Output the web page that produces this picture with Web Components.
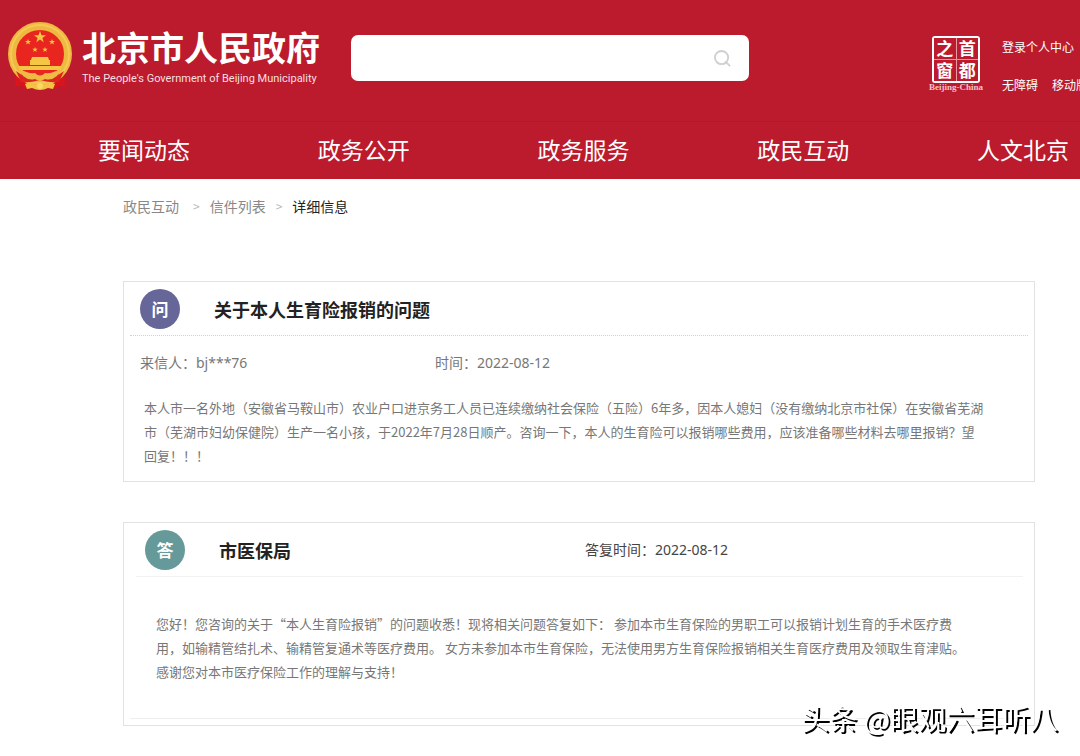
<!DOCTYPE html>
<html lang="zh-CN">
<head>
<meta charset="utf-8">
<meta name="viewport" content="width=device-width, initial-scale=1">
<title>北京市人民政府 - 信件详细信息</title>
<style>
  * { box-sizing: border-box; }

  body {
    margin: 0;
    background: #fff;
    color: #777;
    font-family: "Noto Sans CJK SC", "Noto Sans", sans-serif;
    font-size: 14px;
    line-height: 24px;
    overflow-x: hidden;
  }

  main {
    padding: 0 45px 30px 123px;
  }

  letter-card + letter-card {
    margin-top: 40px;
  }
</style>
</head>
<body>
  <site-header></site-header>
  <site-nav></site-nav>
  <main>
    <bread-crumb></bread-crumb>
    <letter-card kind="ask" mark="问">
      <span slot="title">关于本人生育险报销的问题</span>
      <span slot="from">来信人：<letter-value>bj***76</letter-value></span>
      <span slot="time">时间：<letter-value>2022-08-12</letter-value></span>
      本人市一名外地（安徽省马鞍山市）农业户口进京务工人员已连续缴纳社会保险（五险）6年多，因本人媳妇（没有缴纳北京市社保）在安徽省芜湖市（芜湖市妇幼保健院）生产一名小孩，于2022年7月28日顺产。咨询一下，本人的生育险可以报销哪些费用，应该准备哪些材料去哪里报销？望回复！！！
    </letter-card>
    <letter-card kind="answer" mark="答">
      <span slot="title">市医保局</span>
      <span slot="reply">答复时间：<letter-value>2022-08-12</letter-value></span>
      您好！您咨询的关于“本人生育险报销”的问题收悉！现将相关问题答复如下： 参加本市生育保险的男职工可以报销计划生育的手术医疗费用，如输精管结扎术、输精管复通术等医疗费用。 女方未参加本市生育保险，无法使用男方生育保险报销相关生育医疗费用及领取生育津贴。感谢您对本市医疗保险工作的理解与支持！
    </letter-card>
  </main>
  <water-mark>头条 @眼观六耳听八</water-mark>

<script>
// small helper: turn a html string into a template
function makeTemplate(html) {
  const template = document.createElement('template');
  template.innerHTML = html;
  return template;
}

const emblemTemplate = makeTemplate(`
  <style>
  :host { display: block; flex: none; width: 64px; height: 70px; }
  svg { display: block; }
  </style>
  <svg width="64" height="70" viewBox="0 0 64 70" aria-hidden="true">
    <path d="M8 46 L7 65 Q14 62 19 68 L25 60 H39 L45 68 Q50 62 57 65 L56 46Z" fill="#d9141c"/>
    <circle cx="32" cy="32" r="28" fill="#e8261f" stroke="#efb840" stroke-width="8"/>
    <circle cx="32" cy="32" r="29" fill="none" stroke="#f4ca55" stroke-width="2"/>
    <g fill="#f5c544">
      <path d="M32 9l1.500 4.200h4.500l-3.600 2.700 1.300 4.300-3.700-2.600-3.700 2.600 1.300-4.300-3.600-2.700h4.500z"/>
      <path d="M20 17l.8 2h2.200l-1.800 1.400.7 2.200-1.900-1.300-1.900 1.300.7-2.200-1.800-1.400h2.200z"/>
      <path d="M44 17l.8 2h2.200l-1.800 1.400.7 2.200-1.900-1.300-1.900 1.300.7-2.200-1.800-1.400h2.200z"/>
      <path d="M27 25l.7 1.800h2l-1.600 1.200.6 2-1.700-1.200-1.700 1.200.6-2-1.600-1.200h2z"/>
      <path d="M37 25l.7 1.800h2l-1.600 1.200.6 2-1.700-1.200-1.700 1.200.6-2-1.600-1.200h2z"/>
      <path d="M24 35h16l1 3h-18zM22 38h20v5h-20z"/>
      <path d="M10 44h44l-2 4H12z"/>
    </g>
    <path d="M8 49 Q19 58 32 53 Q45 58 56 49 L51 60 Q42 61 32 58 Q22 61 13 60Z" fill="#dc2420"/>
    <path d="M12 47 Q20 52 27 51 Q32 56 37 51 Q44 52 52 47 L49 54 Q43 59 37 57 Q32 60 27 57 Q21 59 15 54Z" fill="#f0bb42"/>
    <path d="M17 62l5-2 5 3q5-4 10 0l5-3 5 2-2 5-5-1q-8 4-16 0l-5 1z" fill="#f4c245"/>
    <circle cx="32" cy="64" r="3" fill="#f9d962"/>
  </svg>
`);

class StateEmblem extends HTMLElement {
  constructor() {
    super();
    this.attachShadow({ mode: 'open' });
    this.shadowRoot.appendChild(emblemTemplate.content.cloneNode(true));
  }
}

const sealTemplate = makeTemplate(`
  <style>
  :host {
    display: flex;
    flex-direction: column;
    align-items: center;
    flex: none;
    width: 54px;
    color: #fff;
  }
  .seal {
    display: grid;
    grid-template-columns: 1fr 1fr;
    grid-template-rows: 1fr 1fr;
    gap: 1px;
    width: 48px;
    height: 47px;
    border: 2px solid #fff;
    border-radius: 3px;
    background: #e79aa2;
    box-sizing: border-box;
  }
  .seal span {
    background: #bc1b2d;
    font-size: 17px;
    font-weight: 700;
    line-height: 20px;
    text-align: center;
  }
  small {
    font-family: "Liberation Serif", serif;
    font-size: 9px;
    font-weight: 700;
    line-height: 8px;
    color: #f0c4c8;
    white-space: nowrap;
  }
  </style>
  <div class="seal"><span>之</span><span>首</span><span>窗</span><span>都</span></div>
  <small>Beijing-China</small>
`);

class CapitalSeal extends HTMLElement {
  constructor() {
    super();
    this.attachShadow({ mode: 'open' });
    this.shadowRoot.appendChild(sealTemplate.content.cloneNode(true));
  }
}

const searchTemplate = makeTemplate(`
  <style>
  :host { display: block; }
  form {
    display: flex;
    align-items: center;
    height: 46px;
    padding: 0 14px 0 16px;
    border-radius: 7px;
    background: #fff;
  }
  input {
    flex: 1;
    min-width: 0;
    height: 40px;
    padding: 0;
    border: 0;
    outline: 0;
    background: none;
    font: inherit;
    color: #333;
  }
  button {
    display: flex;
    padding: 4px;
    border: 0;
    background: none;
    cursor: pointer;
  }
  </style>
  <form role="search">
    <input type="text" aria-label="搜索">
    <button type="button" aria-label="搜索">
      <svg width="17" height="17" viewBox="0 0 18 18" fill="none" stroke="#d0d0d0" stroke-width="2">
        <circle cx="8" cy="8" r="7"/>
        <path d="M12 12l5 5"/>
      </svg>
    </button>
  </form>
`);

class SearchBox extends HTMLElement {
  constructor() {
    super();
    this.attachShadow({ mode: 'open' });
    this.shadowRoot.appendChild(searchTemplate.content.cloneNode(true));
  }
}

const headerTemplate = makeTemplate(`
  <style>
  :host {
    display: flex;
    align-items: flex-start;
    height: 121px;
    padding-left: 8px;
    background: #bc1b2d;
    color: #fff;
    overflow: hidden;
  }
  state-emblem { margin-top: 22px; }
  .name {
    flex: none;
    width: 269px;
    padding: 26px 0 0 10px;
    white-space: nowrap;
    box-sizing: border-box;
  }
  h1 {
    margin: 0;
    font-size: 34px;
    line-height: 42px;
  }
  .name p {
    margin: 0;
    font-family: Roboto, sans-serif;
    font-size: 11px;
    line-height: 22px;
    color: #f9dfe1;
  }
  search-box { flex: 0 1 398px; margin: 35px auto 0 10px; }
  capital-seal { margin: 36px 19px 0 0; }
  .links {
    flex: none;
    display: grid;
    gap: 14px;
    width: 78px;
    padding-top: 35px;
    font-size: 12px;
    white-space: nowrap;
  }
  .links div { display: flex; gap: 14px; }
  a { color: inherit; text-decoration: none; }
  </style>
  <state-emblem></state-emblem>
  <div class="name">
    <h1>北京市人民政府</h1>
    <p>The People's Government of Beijing Municipality</p>
  </div>
  <search-box></search-box>
  <capital-seal></capital-seal>
  <div class="links">
    <div><a href="#">登录个人中心</a></div>
    <div><a href="#">无障碍</a><a href="#">移动版</a></div>
  </div>
`);

class SiteHeader extends HTMLElement {
  constructor() {
    super();
    this.attachShadow({ mode: 'open' });
    this.shadowRoot.appendChild(headerTemplate.content.cloneNode(true));
  }
}

const navTemplate = makeTemplate(`
  <style>
  :host { display: block; background: #bc1b2d; border-top: 1px solid #a91c2c; }
  nav {
    display: flex;
    justify-content: space-between;
    padding: 0 11px 2px 98px;
  }
  a {
    color: #fff;
    font-size: 23px;
    line-height: 55px;
    text-decoration: none;
    white-space: nowrap;
  }
  </style>
  <nav>
    <a href="#">要闻动态</a>
    <a href="#">政务公开</a>
    <a href="#">政务服务</a>
    <a href="#">政民互动</a>
    <a href="#">人文北京</a>
  </nav>
`);

class SiteNav extends HTMLElement {
  constructor() {
    super();
    this.attachShadow({ mode: 'open' });
    this.shadowRoot.appendChild(navTemplate.content.cloneNode(true));
  }
}

const crumbTemplate = makeTemplate(`
  <style>
  :host { display: block; padding: 15px 0 63px; }
  nav { display: flex; gap: 10px; }
  a { color: #888; text-decoration: none; }
  a:first-child { margin-right: 4px; }
  i { font-style: normal; font-size: 12px; color: #bbb; }
  span { color: #222; }
  </style>
  <nav aria-label="面包屑">
    <a href="#">政民互动</a><i>&gt;</i><a href="#">信件列表</a><i>&gt;</i><span>详细信息</span>
  </nav>
`);

class BreadCrumb extends HTMLElement {
  constructor() {
    super();
    this.attachShadow({ mode: 'open' });
    this.shadowRoot.appendChild(crumbTemplate.content.cloneNode(true));
  }
}

const cardTemplate = makeTemplate(`
  <style>
  :host {
    display: block;
    padding: 0 6px;
    border: 1px solid #e2e2e2;
  }
  header {
    display: grid;
    grid-template-columns: 74px 366px 1fr;
    align-items: center;
    height: 54px;
    padding-left: 10px;
    border-bottom: 1px dotted #d0d0d0;
    box-sizing: border-box;
  }
  .mark {
    width: 40px;
    height: 40px;
    border-radius: 50%;
    background: #666699;
    color: #fff;
    font-size: 17px;
    font-weight: 700;
    line-height: 40px;
    text-align: center;
  }
  h2 { margin: 0; font-size: 18px; line-height: 24px; color: #222; }
  .reply { color: #444; }
  .meta {
    display: grid;
    grid-template-columns: 295px 1fr;
    padding: 14px 10px;
  }
  .text {
    padding: 7px 42px 13px 14px;
    font-size: 13px;
    line-height: 24px;
  }

  :host([kind="answer"]) { padding-bottom: 6px; }
  :host([kind="answer"]) header {
    margin: 0 5px 0 6px;
    padding-left: 9px;
    border-bottom: 1px solid #f2f2f2;
  }
  :host([kind="answer"]) .mark { background: #669999; }
  :host([kind="answer"]) .meta { display: none; }
  :host([kind="answer"]) .text {
    padding: 35px 55px 34px 26px;
    border-bottom: 1px solid #eee;
  }
  </style>
  <article>
    <header>
      <div class="mark"></div>
      <h2><slot name="title"></slot></h2>
      <div class="reply"><slot name="reply"></slot></div>
    </header>
    <div class="meta">
      <div><slot name="from"></slot></div>
      <div><slot name="time"></slot></div>
    </div>
    <div class="text"><slot></slot></div>
  </article>
`);

class LetterCard extends HTMLElement {
  constructor() {
    super();
    this.attachShadow({ mode: 'open' });
    this.shadowRoot.appendChild(cardTemplate.content.cloneNode(true));
    this.shadowRoot.querySelector('.mark').textContent = this.getAttribute('mark');
  }
}

// latin values (user id, dates) next to a chinese label
// inline host, so no whitespace around the slot
const valueTemplate = makeTemplate(`<style>:host { display: inline; font-family: "Noto Sans", sans-serif; }</style><slot></slot>`);

class LetterValue extends HTMLElement {
  constructor() {
    super();
    this.attachShadow({ mode: 'open' });
    this.shadowRoot.appendChild(valueTemplate.content.cloneNode(true));
  }
}

// white text, only its hard shadow is visible on the page
const markTemplate = makeTemplate(`
  <style>
  :host {
    position: fixed;
    right: 22px;
    bottom: 18px;
    color: #fff;
    font-size: 28px;
    line-height: 40px;
    text-shadow: 2px 2px 0 #000;
    white-space: nowrap;
    pointer-events: none;
  }
  </style>
  <slot></slot>
`);

class WaterMark extends HTMLElement {
  constructor() {
    super();
    this.attachShadow({ mode: 'open' });
    this.shadowRoot.appendChild(markTemplate.content.cloneNode(true));
  }
}

window.customElements.define('state-emblem', StateEmblem);
window.customElements.define('capital-seal', CapitalSeal);
window.customElements.define('search-box', SearchBox);
window.customElements.define('site-header', SiteHeader);
window.customElements.define('site-nav', SiteNav);
window.customElements.define('bread-crumb', BreadCrumb);
window.customElements.define('letter-value', LetterValue);
window.customElements.define('letter-card', LetterCard);
window.customElements.define('water-mark', WaterMark);
</script>
</body>
</html>
